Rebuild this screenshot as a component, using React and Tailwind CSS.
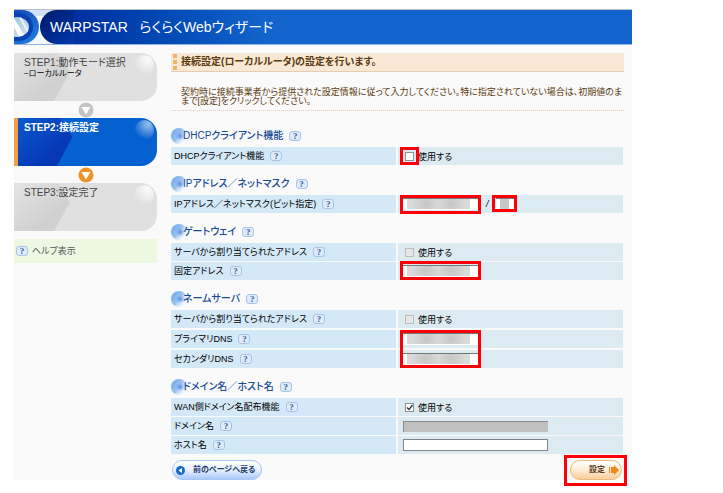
import React from 'react';

const HelpIcon = ({ label }) => (
    <a
        href="#help"
        aria-label={`${label} ヘルプ`}
        className="inline-flex h-2.5 w-3 shrink-0 items-center justify-center rounded-[3px] border border-[#a5c4ea] bg-[#deebfa] font-['Liberation_Serif',serif] text-[9px] leading-none font-bold text-[#3c5f96]"
    >
        ?
    </a>
);

const Logo = () => (
    <svg className="h-[34px] w-[60px] shrink-0" viewBox="0 0 60 34" aria-hidden="true">
        <defs>
            <linearGradient id="disc" x1="0" y1="0" x2="0.6" y2="1">
                <stop offset="0" stopColor="#0d4cb4" />
                <stop offset="1" stopColor="#2478dc" />
            </linearGradient>
            <linearGradient id="lens" x1="0" y1="0" x2="1" y2="1">
                <stop offset="0" stopColor="#8fbbe0" />
                <stop offset="1" stopColor="#d7e6ee" />
            </linearGradient>
            <linearGradient id="pill" x1="0" y1="0" x2="1" y2="1">
                <stop offset="0" stopColor="#001a66" />
                <stop offset="1" stopColor="#0038ae" />
            </linearGradient>
            <clipPath id="lensClip">
                <ellipse cx="3" cy="17" rx="12" ry="10" />
            </clipPath>
        </defs>
        <rect width="60" height="34" fill="#f4f8fc" />
        <path d="M14 1h46M18 3h42M21 5h39" stroke="#a9c9ec" strokeWidth="1" />
        <path d="M0 0h8a17 17 0 0 1 0 34H0z" fill="url(#disc)" />
        <path d="M0 3h5a14 14 0 0 1 0 28H0z" fill="#0a41b4" />
        <ellipse cx="3" cy="17" rx="12" ry="10" fill="url(#lens)" />
        <g clipPath="url(#lensClip)">
            <path d="M-4 6 10 30" stroke="#fff" strokeWidth="5" />
            <path d="M5 5 14 22" stroke="#eef5fa" strokeWidth="2" />
        </g>
        <path d="M60 0H43a17 17 0 0 0 0 34h17z" fill="url(#pill)" />
    </svg>
);

const StepCard = ({ title, note, active }) => (
    <li
        className={`relative h-12 overflow-hidden rounded-r-2xl pt-1 ${
            active
                ? 'border-l-4 border-[#f0a040] bg-[#0560d0] pl-1.5 font-bold text-white'
                : 'bg-[#e0e0e0] pl-2.5 text-[#444]'
        }`}
    >
        <svg className="absolute inset-0 h-full w-full" viewBox="0 0 143 48" preserveAspectRatio="none" aria-hidden="true">
            <defs>
                <linearGradient id={active ? 'wedgeOn' : 'wedgeOff'} x1="0" y1="0" x2="1" y2="1">
                    <stop offset="0" stopColor={active ? '#0a5ad0' : '#e4e4e4'} />
                    <stop offset="0.7" stopColor={active ? '#0638b4' : '#d0d0d0'} />
                    <stop offset="1" stopColor={active ? '#0638b4' : '#d6d6d6'} />
                </linearGradient>
                <radialGradient id={active ? 'shineOn' : 'shineOff'} cx="0.7" cy="0.2" r="0.8">
                    <stop offset="0" stopColor="#fff" stopOpacity={active ? 0.6 : 0.9} />
                    <stop offset="1" stopColor="#fff" stopOpacity="0" />
                </radialGradient>
            </defs>
            <path d="M0 0h43l13 19-16 29H0z" fill={`url(#${active ? 'wedgeOn' : 'wedgeOff'})`} />
            <circle cx="130" cy="12" r="10" fill={`url(#${active ? 'shineOn' : 'shineOff'})`} />
        </svg>
        <p className="relative text-[10px] leading-3">{title}</p>
        {note && <p className="relative text-[8px] leading-[10px] text-black">{note}</p>}
    </li>
);

const StepArrow = ({ color }) => (
    <li className="flex h-[17px] items-center justify-center" aria-hidden="true">
        <svg width="16" height="16" viewBox="0 0 16 16">
            <circle cx="8" cy="8" r="7.5" fill={color} />
            <path d="M3.5 5h9L8 12.5z" fill="#fff" />
        </svg>
    </li>
);

const Sidebar = () => (
    <nav className="w-[143px] shrink-0">
        <ol>
            <StepCard title="STEP1:動作モード選択" note="−ローカルルータ" />
            <StepArrow color="#c4c4c4" />
            <StepCard title="STEP2:接続設定" active />
            <StepArrow color="#ee9226" />
            <StepCard title="STEP3:設定完了" />
        </ol>
        <div className="mt-2 flex h-6 items-center gap-1 bg-[#ecf8e2] pl-0.5 text-[#555]">
            <HelpIcon label="全般" />
            <a href="#help-view">ヘルプ表示</a>
        </div>
    </nav>
);

const Section = ({ title, gap = 'gap-y-px', children }) => (
    <section>
        <div className="flex h-[30px] items-end pb-[3px]">
            <svg className="h-4 w-3 shrink-0 overflow-visible" viewBox="0 0 12 16" aria-hidden="true">
                <defs>
                    <linearGradient id="orb" x1="0" y1="0.1" x2="1" y2="0.8">
                        <stop offset="0" stopColor="#6ba2e8" />
                        <stop offset="0.5" stopColor="#9cc2f2" />
                        <stop offset="1" stopColor="#fafafa" stopOpacity="0" />
                    </linearGradient>
                    <radialGradient id="orbCore">
                        <stop offset="0" stopColor="#4a8ae0" />
                        <stop offset="1" stopColor="#8ab6f0" stopOpacity="0" />
                    </radialGradient>
                </defs>
                <circle cx="8" cy="8" r="8" fill="url(#orb)" />
                <circle cx="9" cy="8" r="5" fill="url(#orbCore)" />
            </svg>
            <h2 className="relative mr-1.5 text-[10px] leading-4 font-medium text-[#164a94]">{title}</h2>
            <span className="flex h-4 items-center">
                <HelpIcon label={title} />
            </span>
        </div>
        <div className={`grid ${gap}`}>{children}</div>
    </section>
);

const Row = ({ id, label, children }) => (
    <div className="grid h-[18px] grid-cols-2 gap-x-0.5">
        <div className="flex items-center gap-1.5 bg-[#d3e9f8] pl-[3px]">
            <label htmlFor={id}>{label}</label>
            <HelpIcon label={label} />
        </div>
        <div className="relative flex items-center bg-[#dcebf2] pl-[5px]">{children}</div>
    </div>
);

const UseCheckbox = ({ id, checked = false, disabled = false }) => (
    <>
        <span className="relative ml-0.5 flex">
            <input
                id={id}
                type="checkbox"
                defaultChecked={checked}
                disabled={disabled}
                className="peer size-[9px] appearance-none border border-[#8a9299] bg-white disabled:border-[#bbb] disabled:bg-[#e6e6e6]"
            />
            <svg className="pointer-events-none absolute inset-0 hidden size-[9px] peer-checked:block" viewBox="0 0 9 9" aria-hidden="true">
                <path d="M2 4.500 4 6.500 7.500 2" fill="none" stroke="#333" strokeWidth="1.300" />
            </svg>
        </span>
        <label htmlFor={id} className="pt-0.5 pl-1">使用する</label>
    </>
);

const MaskedInput = ({ id, label, width = 'w-[75px]', mask = 'right-2' }) => (
    <span className={`relative h-3 ${width}`}>
        <input
            id={id}
            type="text"
            aria-label={label}
            className="block h-full w-full border-t border-[#777] bg-white"
        />
        <span
            className={`pointer-events-none absolute inset-y-px left-1 bg-[#dadada] bg-[radial-gradient(circle_at_30%_50%,#c6c6c6,transparent_14px),radial-gradient(circle_at_70%_50%,#c6c6c6,transparent_14px)] ${mask}`}
        />
    </span>
);

const Mark = ({ className }) => (
    <span className={`pointer-events-none absolute border-[3px] border-[#fb0007] ${className}`} />
);

export default function App() {
    return (
        <div className="bg-white pt-[9px] pr-[91px] pb-3 pl-3.5 font-['Liberation_Sans','Noto_Sans_CJK_JP',sans-serif] text-[9px] leading-3 text-black [font-feature-settings:'palt']">
            <div className="bg-[#fafafa]">
                <header className="flex h-9 items-center border-t border-b border-t-[#b9bec4] border-b-[#8fb4e4] bg-linear-to-r from-[#0030a0] from-10% via-[#1263cb] via-40% to-[#1263cb]">
                    <Logo />
                    <h1 className="-ml-6 text-sm leading-5 text-white">WARPSTAR&nbsp;&nbsp; らくらくWebウィザード</h1>
                </header>

                <div className="flex gap-3.5 pt-2 pr-2">
                    <Sidebar />

                    <form className="min-w-0 flex-1" onSubmit={(e) => e.preventDefault()}>
                        <div className="flex h-[19px] items-center gap-1 border-b border-[#e6cdb4] bg-[#f9e8d6]">
                            <span className="ml-0.5 grid gap-0.5">
                                <i className="size-1 bg-[#f3b264]" />
                                <i className="size-1 bg-[#f3b264]" />
                                <i className="size-1 bg-[#f3b264]" />
                            </span>
                            <p className="text-[10px] font-bold text-[#5c3a10]">接続設定(ローカルルータ)の設定を行います。</p>
                        </div>
                        <p className="border-b border-dotted border-[#e3c9b8] pt-4 pb-1 pl-2.5 leading-[9px] text-[#5c3a10]">
                            契約時に接続事業者から提供された設定情報に従って入力してください。特に指定されていない場合は、初期値のま
                            <br />
                            まで[設定]をクリックしてください。
                        </p>

                        <div className="pt-1.5 pr-px">
                            <Section title="DHCPクライアント機能">
                                <Row id="dhcp" label="DHCPクライアント機能">
                                    <UseCheckbox id="dhcp" />
                                    <Mark className="top-0 left-0.5 h-[18px] w-[19px]" />
                                </Row>
                            </Section>

                            <Section title="IPアドレス／ネットマスク">
                                <Row id="ip" label="IPアドレス／ネットマスク(ビット指定)">
                                    <MaskedInput id="ip" />
                                    <span className="w-[18px] pl-2 italic">/</span>
                                    <MaskedInput id="mask" label="ネットマスク" width="w-[18px]" mask="right-[5px]" />
                                    <Mark className="top-0 left-0.5 h-[19px] w-[81px]" />
                                    <Mark className="top-0 left-[94px] h-[17px] w-[25px]" />
                                </Row>
                            </Section>

                            <Section title="ゲートウェイ">
                                <Row id="gw-auto" label="サーバから割り当てられたアドレス">
                                    <UseCheckbox id="gw-auto" disabled />
                                </Row>
                                <Row id="gw" label="固定アドレス">
                                    <MaskedInput id="gw" />
                                    <Mark className="-top-px left-0.5 h-[19px] w-[81px]" />
                                </Row>
                            </Section>

                            <Section title="ネームサーバ" gap="gap-y-0.5">
                                <Row id="ns-auto" label="サーバから割り当てられたアドレス">
                                    <UseCheckbox id="ns-auto" disabled />
                                </Row>
                                <Row id="dns1" label="プライマリDNS">
                                    <MaskedInput id="dns1" />
                                    <Mark className="top-0 left-0.5 z-10 h-[38px] w-[81px]" />
                                </Row>
                                <Row id="dns2" label="セカンダリDNS">
                                    <MaskedInput id="dns2" />
                                </Row>
                            </Section>

                            <Section title="ドメイン名／ホスト名">
                                <Row id="wan" label="WAN側ドメイン名配布機能">
                                    <UseCheckbox id="wan" checked />
                                </Row>
                                <Row id="domain" label="ドメイン名">
                                    <input id="domain" type="text" disabled className="h-[11px] w-[145px] border-t border-l border-[#8b8b8b] bg-[#c0c0c0]" />
                                </Row>
                                <Row id="host" label="ホスト名">
                                    <input id="host" type="text" className="h-3 w-[145px] border border-[#858585] bg-white" />
                                </Row>
                            </Section>
                        </div>

                        <div className="flex h-[26px] items-end justify-between">
                            <button
                                type="button"
                                className="ml-px flex h-5 w-[90px] items-center gap-2 rounded-full border border-[#a9c6f5] bg-linear-to-b from-white via-[#e8f1ff] to-[#a9c8fb] pl-[3px] text-[8px] font-bold text-[#24406e]"
                            >
                                <svg width="9" height="9" viewBox="0 0 9 9" aria-hidden="true">
                                    <circle cx="4.500" cy="4.500" r="4.500" fill="#1668cc" />
                                    <path d="M6 2v5L2.500 4.500z" fill="#fff" />
                                </svg>
                                前のページへ戻る
                            </button>
                            <span className="relative mr-0.5">
                                <button
                                    type="submit"
                                    className="flex h-5 w-[52px] items-center justify-end gap-1 rounded-full border border-[#f0b878] bg-linear-to-b from-white via-[#fdecd4] to-[#f8cf98] pr-0.5 text-[8px] font-bold text-[#5a3c1c]"
                                >
                                    設定
                                    <svg width="10" height="10" viewBox="0 0 10 10" aria-hidden="true">
                                        <path d="M0 2h1v6H0zM2 2h3V0l5 5-5 5V8H2z" fill="#ee8a1c" />
                                    </svg>
                                </button>
                                <Mark className="-top-[5px] -left-1.5 h-[31px] w-[63px]" />
                            </span>
                        </div>
                    </form>
                </div>
            </div>
        </div>
    );
}
